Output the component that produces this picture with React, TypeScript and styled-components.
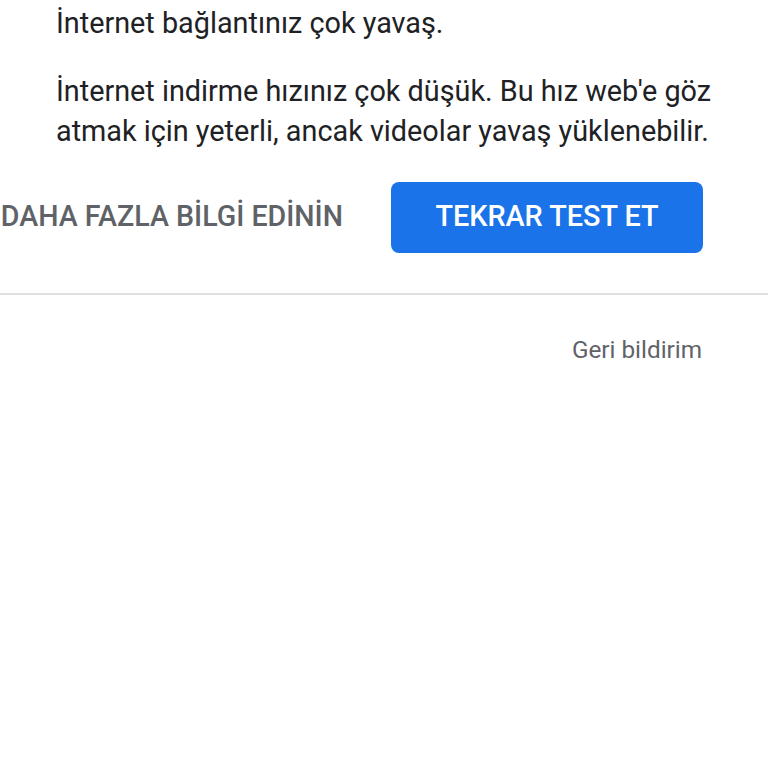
import styled, { createGlobalStyle } from 'styled-components'

const GlobalStyle = createGlobalStyle`
  html, body {
    margin: 0;
    padding: 0;
    background: #ffffff;
  }
  body {
    font-family: Roboto, "Noto Sans", Arial, sans-serif;
    -webkit-font-smoothing: antialiased;
  }
`

const Page = styled.div`
  width: 768px;
  height: 768px;
  overflow: hidden;
  display: flex;
  flex-direction: column;
`

const Content = styled.div`
  padding: 3px 40px 0 56px;
  display: flex;
  flex-direction: column;
  gap: 28px;
`

const Message = styled.p`
  margin: 0;
  font-size: 28.8px;
  line-height: 40px;
  color: #202124;
`

const Actions = styled.div`
  display: flex;
  justify-content: flex-end;
  align-items: center;
  gap: 48px;
  padding: 31px 65px 0 0;
  overflow: hidden;
`

const TextButton = styled.button`
  flex-shrink: 0;
  border: none;
  background: none;
  padding: 0 0 3px;
  font-family: inherit;
  font-size: 28.6px;
  font-weight: 500;
  color: #5f6368;
  white-space: nowrap;
  cursor: pointer;
`

const PrimaryButton = styled.button`
  flex-shrink: 0;
  width: 312px;
  height: 71px;
  padding: 0 0 3px;
  border: none;
  border-radius: 8px;
  background: #1a73e8;
  color: #ffffff;
  font-family: inherit;
  font-size: 28.8px;
  font-weight: 500;
  cursor: pointer;
`

const Divider = styled.hr`
  margin: 40px 0 0;
  border: none;
  border-top: 2px solid #e0e0e0;
`

const Footer = styled.div`
  display: flex;
  justify-content: flex-end;
  padding: 39px 66px 0 0;
`

const FeedbackLink = styled.a`
  font-size: 24.3px;
  line-height: 32px;
  color: #5f6368;
  text-decoration: none;
  cursor: pointer;
`

const App = () => {
  return (
    <>
      <GlobalStyle />
      <Page>
        <Content>
          <Message>İnternet bağlantınız çok yavaş.</Message>
          <Message>
            İnternet indirme hızınız çok düşük. Bu hız web'e göz atmak için
            yeterli, ancak videolar yavaş yüklenebilir.
          </Message>
        </Content>
        <Actions>
          <TextButton>DAHA FAZLA BİLGİ EDİNİN</TextButton>
          <PrimaryButton>TEKRAR TEST ET</PrimaryButton>
        </Actions>
        <Divider />
        <Footer>
          <FeedbackLink>Geri bildirim</FeedbackLink>
        </Footer>
      </Page>
    </>
  )
}

export default App
